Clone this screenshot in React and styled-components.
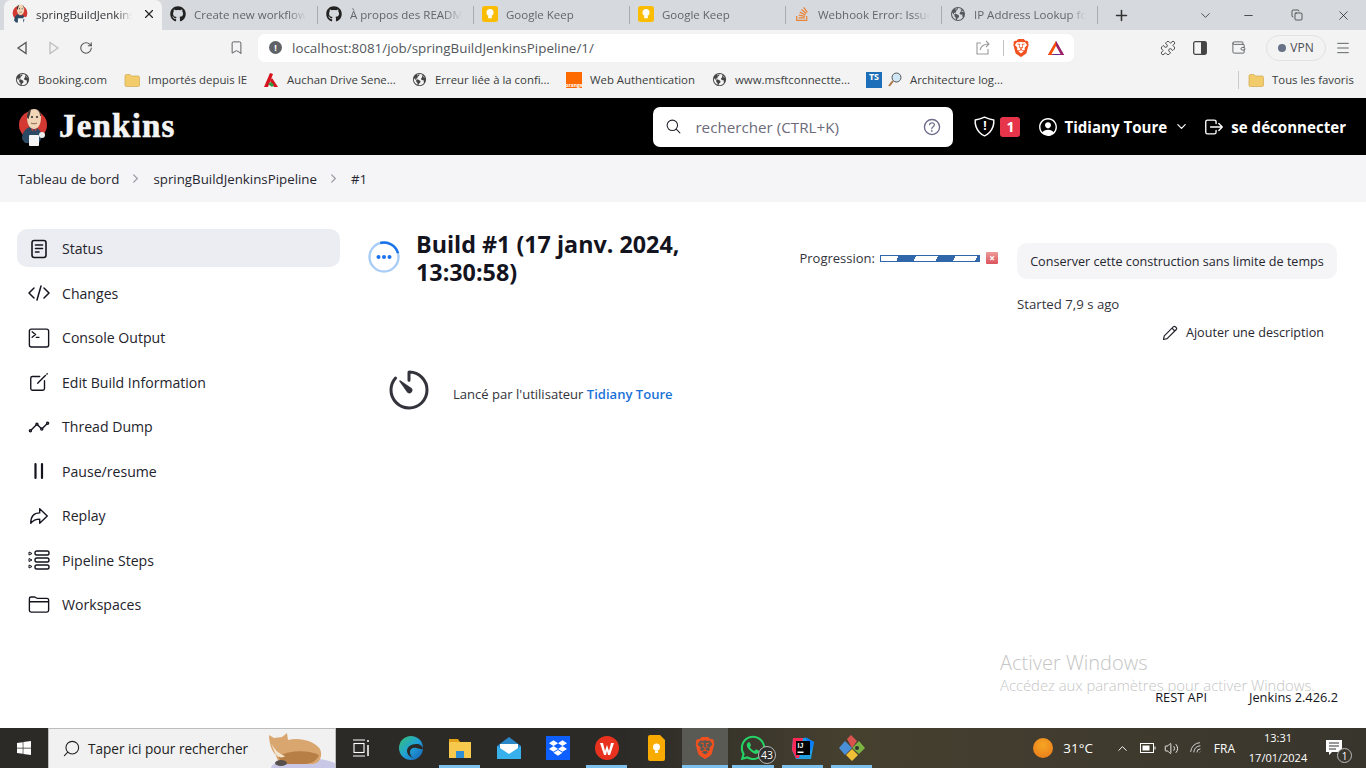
import React from "react";
import styled, { createGlobalStyle } from "styled-components";
import { FaGithub, FaStackOverflow, FaWindows, FaDropbox, FaWhatsapp } from "react-icons/fa";
import { SiBrave } from "react-icons/si";
import {
  IoTerminalOutline,
  IoCreateOutline,
  IoAnalyticsOutline,
  IoArrowRedoOutline,
  IoFolderOutline,
  IoSearchOutline,
  IoHelpCircleOutline,
  IoPersonCircleOutline,
  IoLogOutOutline,
  IoChevronDownOutline,
  IoChevronForwardOutline,
  IoTimerOutline,
  IoEarth,
  IoShieldOutline,
} from "react-icons/io5";
import { Plus, ChevronDown, Minus, Copy, X, RotateCw, Bookmark, Puzzle, Wallet, Menu, Search, ChevronUp, Volume2, Wifi } from "lucide-react";

const GlobalStyle = createGlobalStyle`
  html, body {
    margin: 0;
    padding: 0;
    height: 100%;
    overflow: hidden;
    background: #fff;
  }
  body {
    font-family: "Open Sans", "Liberation Sans", sans-serif;
    color: #14141f;
  }
  * { box-sizing: border-box; }
`;

const Page = styled.div`
  position: relative;
  width: 1366px;
  height: 768px;
  display: flex;
  flex-direction: column;
  overflow: hidden;
`;

/* browser chrome */

const TabStrip = styled.div`
  height: 30px;
  background: #d6dade;
  display: flex;
  align-items: stretch;
  padding-left: 4px;
  flex-shrink: 0;
`;

const Tab = styled.div`
  width: ${({ $active }) => ($active ? "158px" : "156px")};
  display: flex;
  align-items: center;
  gap: 8px;
  padding: 0 0 2px 8px;
  font-size: 11.5px;
  color: ${({ $active }) => ($active ? "#33363a" : "#62666a")};
  background: ${({ $active }) => ($active ? "#f3f3f3" : "transparent")};
  border-radius: ${({ $active }) => ($active ? "7px 7px 0 0" : "0")};
  position: relative;
  &::after {
    content: "";
    display: ${({ $active }) => ($active ? "none" : "block")};
    position: absolute;
    right: 0;
    top: 6px;
    bottom: 6px;
    width: 1px;
    background: #a9adb1;
  }
`;

const TabTitle = styled.span`
  white-space: nowrap;
  overflow: hidden;
  width: ${({ $w }) => $w || "112px"};
  -webkit-mask-image: linear-gradient(to right, #000 84%, transparent);
  mask-image: linear-gradient(to right, #000 84%, transparent);
`;

const TabClose = styled.span`
  display: flex;
  margin-left: 2px;
  color: #222;
`;

const NewTab = styled.div`
  margin-left: 15px;
  display: flex;
  align-items: center;
  color: #333;
`;

const WindowControls = styled.div`
  margin-left: auto;
  display: flex;
  align-items: center;
  color: #222;
  padding-right: 15px;
`;

const WindowButton = styled.span`
  display: flex;
  margin-left: ${({ $ml }) => $ml || 0}px;
`;

const Toolbar = styled.div`
  height: 35px;
  background: #f3f3f3;
  display: flex;
  align-items: center;
  padding-left: 15px;
  flex-shrink: 0;
  color: #55585c;
`;

const ToolIcon = styled.span`
  display: flex;
  align-items: center;
  justify-content: center;
  margin-left: ${({ $ml }) => $ml || 0}px;
  color: ${({ $color }) => $color || "#55585c"};
`;

const UrlBox = styled.div`
  margin-left: 14px;
  width: 816px;
  height: 28px;
  background: #fff;
  border-radius: 7px;
  display: flex;
  align-items: center;
  padding: 0 9px 0 11px;
  font-size: 13.4px;
  color: #53575b;
`;

const UrlDot = styled.span`
  width: 13px;
  height: 13px;
  border-radius: 50%;
  background: #5f6368;
  color: #fff;
  font-size: 9px;
  font-weight: 700;
  display: flex;
  align-items: center;
  justify-content: center;
  margin-right: 10px;
`;

const UrlText = styled.span`
  flex: 1;
`;

const UrlDivider = styled.span`
  width: 1px;
  height: 16px;
  background: #c2c2c2;
  margin-left: 12px;
`;

const VpnPill = styled.div`
  margin-left: 20px;
  width: 60px;
  height: 26px;
  border: 1px solid #e2e2e2;
  border-radius: 13px;
  display: flex;
  align-items: center;
  justify-content: center;
  gap: 4px;
  font-size: 12px;
  color: #4c5054;
`;

const VpnDot = styled.span`
  width: 8px;
  height: 8px;
  border-radius: 50%;
  background: #6a7288;
`;

const BookmarksBar = styled.div`
  height: 33px;
  background: #f3f3f3;
  display: flex;
  align-items: center;
  padding: 0 0 4px 15px;
  flex-shrink: 0;
`;

const BookmarkItem = styled.div`
  width: ${({ $w }) => $w}px;
  display: flex;
  align-items: center;
  gap: 8px;
  font-size: 11.4px;
  color: #3a3d40;
  white-space: nowrap;
`;

const BookmarkDivider = styled.span`
  width: 1px;
  height: 18px;
  background: #c9c9c9;
  margin-right: 9px;
`;

const FavSquare = styled.span`
  width: 16px;
  height: 16px;
  flex-shrink: 0;
  display: flex;
  align-items: flex-end;
  justify-content: center;
  background: ${({ $bg }) => $bg};
  color: #fff;
  font-size: ${({ $fs }) => $fs || 5}px;
  font-weight: 700;
  line-height: 1;
`;

const TsMark = styled(FavSquare)`
  align-items: flex-start;
  margin-right: -2px;
`;

/* jenkins page */

const JenkinsHeader = styled.header`
  height: 57px;
  background: #000;
  display: flex;
  align-items: center;
  padding: 0 20px 0 18px;
  color: #fff;
  flex-shrink: 0;
`;

const Brand = styled.div`
  display: flex;
  align-items: center;
  gap: 11px;
  font-family: "Liberation Serif", serif;
  font-weight: 700;
  font-size: 33px;
  letter-spacing: 1.2px;
  -webkit-text-stroke: 0.6px #f4f4f4;
  color: #f4f4f4;
`;

const SearchBox = styled.div`
  margin-left: auto;
  width: 300px;
  height: 40px;
  border-radius: 7px;
  background: #fff;
  display: flex;
  align-items: center;
  padding: 0 10px 0 12px;
  color: #6d6b7a;
  font-size: 15.2px;
  gap: 13px;
`;

const SearchText = styled.span`
  flex: 1;
`;

const HeaderGroup = styled.div`
  display: flex;
  align-items: center;
  margin-left: ${({ $ml }) => $ml}px;
  gap: ${({ $gap }) => $gap}px;
  font-weight: 700;
  font-size: 15.1px;
  white-space: nowrap;
`;

const ShieldWrap = styled.span`
  position: relative;
  display: flex;
`;

const ShieldMark = styled.span`
  position: absolute;
  left: 0;
  right: 0;
  top: 3px;
  text-align: center;
  font-size: 12px;
  font-weight: 700;
  line-height: 15px;
`;

const AlertBadge = styled.span`
  width: 20px;
  height: 20px;
  border-radius: 3px;
  background: #e6354a;
  color: #fff;
  font-size: 14px;
  display: flex;
  align-items: center;
  justify-content: center;
`;

const UserChevron = styled(IoChevronDownOutline)`
  margin-left: 3px;
`;

const Breadcrumbs = styled.nav`
  height: 47px;
  background: #f5f5f8;
  display: flex;
  align-items: center;
  padding-left: 18px;
  font-size: 13.3px;
  font-weight: 500;
  color: #26262f;
  flex-shrink: 0;
`;

const CrumbArrow = styled.span`
  display: flex;
  margin: 0 11px 0 10px;
  color: #9a9aa3;
`;

const Content = styled.div`
  flex: 1;
  display: flex;
  flex-direction: column;
  background: #fff;
`;

const Layout = styled.div`
  flex: 1;
  display: flex;
  padding: 27px 29px 0 17px;
`;

const SideNav = styled.aside`
  width: 323px;
  flex-shrink: 0;
  display: flex;
  flex-direction: column;
  gap: 6.5px;
`;

const NavItem = styled.div`
  height: 38px;
  border-radius: 10px;
  background: ${({ $active }) => ($active ? "#ecedf2" : "transparent")};
  display: flex;
  align-items: center;
  padding: 1px 0 0 11px;
  gap: 12px;
  font-size: 14.1px;
  font-weight: 500;
  color: #23232c;
`;

const NavIcon = styled.span`
  width: 22px;
  height: 22px;
  display: flex;
  align-items: center;
  justify-content: center;
  color: #14141f;
`;

const Main = styled.main`
  flex: 1;
  margin-left: 28px;
  min-width: 0;
`;

const TitleRow = styled.div`
  display: flex;
  align-items: flex-start;
  gap: 16px;
  margin-top: 1px;
`;

const SpinnerSlot = styled.span`
  display: flex;
  margin-top: 11px;
`;

const BuildTitle = styled.h1`
  margin: 0;
  width: 300px;
  font-size: 23.3px;
  line-height: 28px;
  font-weight: 700;
  color: #14141f;
`;

const CauseRow = styled.div`
  display: flex;
  align-items: center;
  margin: 80px 0 0 17px;
  gap: 20px;
  font-size: 13.05px;
  color: #33333c;
`;

const CauseText = styled.span`
  margin-top: 8px;
`;

const UserLink = styled.a`
  color: #1a73d9;
  font-weight: 600;
`;

const ProgressBox = styled.div`
  display: flex;
  align-items: center;
  align-self: flex-start;
  margin: 20px 19px 0 0;
  font-size: 13px;
  color: #33333c;
  gap: 5px;
`;

const ProgressBar = styled.div`
  width: 100px;
  height: 7px;
  border: 1px solid #2f67aa;
  background: linear-gradient(
    114deg,
    #fff 0 16px,
    #2f67aa 16px 32px,
    #fff 32px 52px,
    #2f67aa 52px 68px,
    #fff 68px 88px,
    #2f67aa 88px
  );
`;

const StopButton = styled.span`
  width: 12px;
  height: 12px;
  margin-left: 1px;
  border-radius: 1px;
  background: linear-gradient(#ef9a9a, #d9535a);
  color: #fff;
  font-size: 10px;
  font-weight: 700;
  line-height: 12px;
  text-align: center;
`;

const SideInfo = styled.div`
  width: 320px;
  flex-shrink: 0;
  padding-top: 14px;
`;

const KeepButton = styled.div`
  height: 36px;
  border-radius: 10px;
  background: #f5f5f8;
  display: flex;
  align-items: center;
  justify-content: center;
  font-size: 12.6px;
  font-weight: 500;
  color: #26262f;
  white-space: nowrap;
`;

const StartedText = styled.div`
  margin-top: 16px;
  font-size: 13.2px;
  color: #33333c;
`;

const DescriptionLink = styled.div`
  margin-top: 11px;
  padding-right: 13px;
  display: flex;
  justify-content: flex-end;
  align-items: center;
  gap: 8px;
  font-size: 12.6px;
  font-weight: 500;
  color: #26262f;
`;

const Footer = styled.footer`
  height: 50px;
  display: flex;
  justify-content: flex-end;
  gap: 42px;
  padding: 10px 28px 0 0;
  font-size: 12.8px;
  color: #15151c;
`;

const Watermark = styled.div`
  position: absolute;
  left: 1000px;
  top: 650px;
  color: #c5c5c5;
  font-weight: 300;
  pointer-events: none;
`;

const WatermarkTitle = styled.div`
  font-size: 20px;
  line-height: 25px;
`;

const WatermarkLine = styled.div`
  font-size: 14.8px;
  line-height: 20px;
  white-space: nowrap;
`;

/* windows taskbar */

const Taskbar = styled.div`
  height: 40px;
  display: flex;
  align-items: center;
  background: linear-gradient(to right, #2b2a27, #2b2a27 45%, #46402f 62%, #38352d 100%);
  color: #fff;
  flex-shrink: 0;
  position: relative;
`;

const StartButton = styled.div`
  width: 48px;
  display: flex;
  justify-content: center;
`;

const SearchBar = styled.div`
  width: 288px;
  height: 40px;
  background: #f1f1f1;
  border: 1px solid #bdbdbd;
  border-bottom: 0;
  display: flex;
  align-items: center;
  padding-left: 13px;
  gap: 7px;
  font-size: 13.6px;
  color: #222;
  overflow: hidden;
`;

const SearchGlass = styled(Search)`
  transform: scaleX(-1);
`;

const FoxArt = styled.span`
  margin-left: auto;
  display: flex;
`;

const TaskApps = styled.div`
  display: flex;
  height: 40px;
`;

const TaskApp = styled.div`
  position: relative;
  width: ${({ $w }) => $w || 49}px;
  height: 40px;
  display: flex;
  align-items: center;
  justify-content: center;
  background: ${({ $active }) => ($active ? "#5a5a55" : "transparent")};
  &::after {
    content: "";
    display: ${({ $open }) => ($open ? "block" : "none")};
    position: absolute;
    left: ${({ $active }) => ($active ? "0" : "4px")};
    right: ${({ $active }) => ($active ? "0" : "4px")};
    bottom: 0;
    height: 3px;
    background: #7cc0ee;
  }
`;

const DropboxTile = styled.span`
  width: 24px;
  height: 24px;
  display: flex;
  align-items: center;
  justify-content: center;
  background: #0d5fff;
  color: #fff;
`;

const CountBadge = styled.span`
  position: absolute;
  right: 2px;
  bottom: 4px;
  width: 18px;
  height: 18px;
  border-radius: 50%;
  border: 1px solid #bbb;
  background: #2f2e2a;
  color: #fff;
  font-size: 10.5px;
  display: flex;
  align-items: center;
  justify-content: center;
`;

const Tray = styled.div`
  margin-left: auto;
  display: flex;
  align-items: center;
  font-size: 12px;
  height: 40px;
`;

const SunIcon = styled.span`
  width: 20px;
  height: 20px;
  border-radius: 50%;
  background: radial-gradient(circle at 50% 35%, #f5a623, #e8761a);
`;

const TrayText = styled.span`
  margin-left: ${({ $ml }) => $ml || 0}px;
  font-size: ${({ $fs }) => $fs || 12}px;
`;

const TrayIcon = styled.span`
  display: flex;
  margin-left: ${({ $ml }) => $ml}px;
`;

const TrayWifi = styled(Wifi)`
  transform: rotate(-45deg);
`;

const Clock = styled.div`
  margin-left: 13px;
  width: 60px;
  text-align: center;
  font-size: 11px;
  line-height: 20px;
`;

const NotifyButton = styled.div`
  position: relative;
  margin: 0 24px 0 18px;
  display: flex;
`;

const NotifyCount = styled.span`
  position: absolute;
  right: -10px;
  bottom: -7px;
  width: 15px;
  height: 15px;
  border-radius: 50%;
  border: 1px solid #bbb;
  background: #3a372e;
  font-size: 10px;
  display: flex;
  align-items: center;
  justify-content: center;
`;

const Butler = ({ width = 30, height = 38 }) => (
  <svg width={width} height={height} viewBox="0 0 30 38">
    <circle cx="15" cy="17" r="14" fill="#d33833" />
    <path d="M4 31c0-7 4-11 8-12l7 1c3 2 5 5 5 9l-3 6H7z" fill="#2c4a63" />
    <path d="M9 9c0-5 3-8 7-8s7 3 7 8c0 6-2 12-7 12S9 15 9 9z" fill="#f0d6b7" />
    <path d="M9 9c0-4 2-7 4-7-1 3-1 5-2 7 0 2-1 3-2 0zM22 8c0-3-1-5-3-6 2 0 4 3 4 6z" fill="#3a3431" />
    <path d="M13 20l3 2 3-2-1 3-2-1-2 1z" fill="#d33833" />
    <circle cx="14" cy="9" r="1" fill="#222" />
    <circle cx="19" cy="9" r="1" fill="#222" />
    <path d="M13 15c2 1 4 1 6 0" stroke="#8a5a44" fill="none" />
    <rect x="11" y="27" width="10" height="11" rx="1" fill="#f4f4f4" />
    <circle cx="24" cy="27" r="3" fill="#eee" />
  </svg>
);

const BackIcon = ({ muted }) => (
  <svg width="14" height="14" viewBox="0 0 14 14" fill="none" stroke={muted ? "#bdbdbd" : "#555"} strokeWidth="1.3">
    {muted ? <path d="M3 1.5v11l8-5.5z" /> : <path d="M11 1.5v11L3 7z" />}
  </svg>
);

const ShareIcon = () => (
  <svg width="16" height="16" viewBox="0 0 16 16" fill="none" stroke="#9b9b9b" strokeWidth="1.1">
    <path d="M6 3H2v11h11V9" />
    <path d="M5 10c1-4 4-6 9-6M11 1l3 3-3 3" />
  </svg>
);

const BatIcon = () => (
  <svg width="18" height="16" viewBox="0 0 18 16">
    <path d="M9 1l8 14H1z" fill="#662d91" />
    <path d="M9 1l8 14h-4L9 8z" fill="#9e1f63" />
    <path d="M9 1L1 15h4l4-7z" fill="#ff5000" />
    <path d="M9 6l4.5 8h-9z" fill="#fff" />
  </svg>
);

const SidePanelIcon = () => (
  <svg width="14" height="14" viewBox="0 0 14 14">
    <rect x="0.7" y="0.7" width="12.6" height="12.6" rx="1.5" fill="none" stroke="#444" strokeWidth="1.3" />
    <rect x="8" y="1" width="5" height="12" fill="#444" />
  </svg>
);

const Folder = () => (
  <svg width="16" height="16" viewBox="0 0 16 16">
    <path d="M1 4c0-1 .5-1.5 1.5-1.5H6L7.5 4H14c1 0 1.5.5 1.5 1.5V13c0 1-.5 1.5-1.5 1.5H2.5c-1 0-1.5-.5-1.5-1.5z" fill="#f2cb6a" stroke="#c9a13f" strokeWidth="0.6" />
  </svg>
);

const Auchan = () => (
  <svg width="16" height="16" viewBox="0 0 16 16">
    <path d="M7 1l3 1-5 13H1z" fill="#d6121f" />
    <path d="M9 6l6 9h-4L7 9z" fill="#d6121f" />
    <path d="M5 12l3-2 3 3-2 2z" fill="#2d9c45" />
  </svg>
);

const KeepIcon = () => (
  <svg width="16" height="16" viewBox="0 0 16 16">
    <rect width="16" height="16" rx="2.5" fill="#fbbc04" />
    <circle cx="8" cy="6.5" r="3.5" fill="#fff" />
    <rect x="6.2" y="9.5" width="3.6" height="2.8" fill="#fff" />
  </svg>
);

const Magnifier = () => (
  <svg width="14" height="16" viewBox="0 0 14 16">
    <circle cx="8.5" cy="5.5" r="4.5" fill="#cfe6f5" stroke="#555" />
    <path d="M5 9l-4 5" stroke="#a8763e" strokeWidth="2" />
  </svg>
);

const Fox = () => (
  <svg width="78" height="40" viewBox="0 0 78 40">
    <ellipse cx="48" cy="39" rx="34" ry="10" fill="#c9c7e6" />
    <path d="M12 6l5 3 8-1 5-4 1 7c10-3 26 0 32 9 3 7 0 14-7 15H30c-8 0-10-4-11-9-4-3-7-12-7-20z" fill="#d9a66f" />
    <path d="M22 27c10-5 26-7 40-1-3 7-9 9-16 9H28c-4 0-6-4-6-8z" fill="#b77e45" />
    <path d="M14 14c4 7 8 11 14 13-3 3-8 1-10-3z" fill="#f4e5cf" />
    <ellipse cx="24" cy="34" rx="6" ry="3" fill="#55504b" />
  </svg>
);

const TaskViewIcon = () => (
  <svg width="16" height="18" viewBox="0 0 16 18" fill="none" stroke="#fff" strokeWidth="1.1">
    <path d="M0 1h12M0 17h12" />
    <rect x="1" y="4.5" width="10" height="9" />
    <path d="M15 1v2M15 6v11" strokeWidth="1.5" />
  </svg>
);

const EdgeIcon = () => (
  <svg width="24" height="24" viewBox="0 0 24 24">
    <defs>
      <linearGradient id="edgeFill" x1="0" y1="0" x2="1" y2="1">
        <stop offset="0" stopColor="#36c26f" />
        <stop offset="0.5" stopColor="#21a3d8" />
        <stop offset="1" stopColor="#1560b8" />
      </linearGradient>
    </defs>
    <circle cx="12" cy="12" r="12" fill="url(#edgeFill)" />
    <path d="M24 13c0-3-3-5-7-5-5 0-9 3-9 7 0 4 4 7 8 7-3 0-5-3-5-6 0-3 3-5 6-4 3 0 5 2 7 1z" fill="#2b2a27" />
  </svg>
);

const ExplorerIcon = () => (
  <svg width="24" height="22" viewBox="0 0 24 22">
    <path d="M1 2h9l2 3H1z" fill="#e3a21a" />
    <rect x="1" y="5" width="22" height="16" fill="#f6c94c" />
    <rect x="8" y="14" width="8" height="7" fill="#2f8fd6" />
  </svg>
);

const MailIcon = () => (
  <svg width="24" height="22" viewBox="0 0 24 22">
    <path d="M12 0l12 9v13H0V9z" fill="#2a87c8" />
    <path d="M3 7h18v6l-9 5-9-5z" fill="#fff" />
    <path d="M0 9l12 8 12-8v13H0z" fill="#38b0ec" />
  </svg>
);

const WpsIcon = () => (
  <svg width="24" height="24" viewBox="0 0 24 24">
    <circle cx="12" cy="12" r="12" fill="#e8321f" />
    <path d="M5 7h3l2 8 2-6 2 6 2-8h3l-4 12h-2l-1-4-1 4h-2z" fill="#fff" />
  </svg>
);

const KeepDocIcon = () => (
  <svg width="17" height="26" viewBox="0 0 17 26">
    <path d="M2 0h10l5 5v19a2 2 0 0 1-2 2H2a2 2 0 0 1-2-2V2a2 2 0 0 1 2-2z" fill="#f9ab00" />
    <circle cx="8.5" cy="12" r="3.5" fill="#fff" />
    <rect x="7" y="15.5" width="3" height="2.5" fill="#fff" />
  </svg>
);

const IdeaIcon = () => (
  <svg width="24" height="24" viewBox="0 0 24 24">
    <path d="M2 2h14l7 4-3 17H5L1 14z" fill="#1f9ee0" />
    <path d="M2 2h10L8 22H5L1 14z" fill="#fe2857" />
    <path d="M14 1l9 5-3 9z" fill="#087cfa" />
    <rect x="5" y="5" width="14" height="14" fill="#000" />
    <text x="6.5" y="12" fontSize="7" fontWeight="700" fill="#fff" fontFamily="Liberation Sans">IJ</text>
    <rect x="6.5" y="15.5" width="6" height="1.5" fill="#fff" />
  </svg>
);

const GitExtIcon = () => (
  <svg width="26" height="26" viewBox="0 0 26 26">
    <path d="M13 13L6 6l-6 7 6 7z" fill="#4a90d9" />
    <path d="M13 13l7-7 6 7-6 6z" fill="#7cb342" />
    <path d="M13 13L8 4l4-4 6 6z" fill="#d9534f" />
    <path d="M13 14l-6 6 6 6 6-6z" fill="#f2c037" />
    <circle cx="18" cy="13" r="2" fill="#333" />
  </svg>
);

const BatteryIcon = () => (
  <svg width="16" height="12" viewBox="0 0 16 12" fill="none" stroke="#fff">
    <rect x="0.5" y="1.5" width="13" height="9" />
    <rect x="2.5" y="3.5" width="7" height="5" fill="#fff" stroke="none" />
    <path d="M15 4.5v3" />
  </svg>
);

const NotifyIcon = () => (
  <svg width="16" height="16" viewBox="0 0 16 16">
    <path d="M0 0h16v12H6l-3 3v-3H0z" fill="#fff" />
    <path d="M3 3h10M3 6h10M3 9h7" stroke="#333" />
  </svg>
);

const StatusIcon = () => (
  <svg width="22" height="22" viewBox="0 0 22 22" fill="none" stroke="#14141f" strokeWidth="1.6" strokeLinecap="round">
    <rect x="4" y="2.5" width="14" height="17" rx="2.2" />
    <path d="M7.5 7h7M7.5 10.5h7M7.5 14h3.5" />
  </svg>
);

const CodeIcon = () => (
  <svg width="22" height="16" viewBox="0 0 22 16" fill="none" stroke="#14141f" strokeWidth="1.5" strokeLinecap="round" strokeLinejoin="round">
    <path d="M6 3L1 8l5 5M16 3l5 5-5 5M13 1L9 15" />
  </svg>
);

const PauseIcon = () => (
  <svg width="22" height="22" viewBox="0 0 22 22" stroke="#14141f" strokeWidth="2.2" strokeLinecap="round">
    <path d="M7.5 4v14M14 4v14" />
  </svg>
);

const StepsIcon = () => (
  <svg width="22" height="20" viewBox="0 0 22 20" fill="none" stroke="#14141f" strokeWidth="1.4">
    <path d="M1 2l3 1.5L1 5zM1 8.5l3 1.5-3 1.5zM1 15l3 1.5L1 18z" strokeWidth="1" />
    <rect x="7" y="1" width="14" height="4" rx="1.8" />
    <rect x="7" y="8" width="14" height="4" rx="1.8" />
    <rect x="7" y="15" width="14" height="4" rx="1.8" />
  </svg>
);

const SpinnerIcon = () => (
  <svg width="32" height="32" viewBox="0 0 32 32" fill="none">
    <circle cx="16" cy="16" r="14.5" stroke="#a9cdf7" strokeWidth="2.4" />
    <path d="M16 1.5A14.5 14.5 0 0 1 30.5 16" stroke="#1a73e8" strokeWidth="2.4" transform="rotate(-15 16 16)" />
    <circle cx="10.5" cy="16" r="2" fill="#1a73e8" />
    <circle cx="16" cy="16" r="2" fill="#1a73e8" />
    <circle cx="21.5" cy="16" r="2" fill="#1a73e8" />
  </svg>
);

const PencilIcon = () => (
  <svg width="16" height="16" viewBox="0 0 16 16" fill="none" stroke="#26262f" strokeWidth="1.2" strokeLinejoin="round">
    <path d="M1.5 14.5l.8-3.6L11.5 1.7a1.3 1.3 0 0 1 1.8 0l1 1a1.3 1.3 0 0 1 0 1.8L5.100 13.7z" />
    <path d="M10 3.2l2.8 2.8" />
  </svg>
);

const tabs = [
  { title: "Create new workflow · fa", icon: <FaGithub size={16} color="#222" /> },
  { title: "À propos des README", icon: <FaGithub size={16} color="#222" /> },
  { title: "Google Keep", icon: <KeepIcon /> },
  { title: "Google Keep", icon: <KeepIcon /> },
  { title: "Webhook Error: Issue w", icon: <FaStackOverflow size={16} color="#e8843a" /> },
  { title: "IP Address Lookup for", icon: <IoEarth size={16} color="#55585c" /> },
];

const bookmarks = [
  { w: 109, label: "Booking.com", icon: <IoEarth size={15} color="#444" /> },
  { w: 139, label: "Importés depuis IE", icon: <Folder /> },
  { w: 149, label: "Auchan Drive Sene...", icon: <Auchan /> },
  { w: 154, label: "Erreur liée à la confi...", icon: <IoEarth size={15} color="#444" /> },
  { w: 146, label: "Web Authentication", icon: <FavSquare $bg="#ff6a00">orange</FavSquare> },
  { w: 154, label: "www.msftconnectte...", icon: <IoEarth size={15} color="#444" /> },
  {
    w: 372,
    label: "Architecture log...",
    icon: (
      <>
        <TsMark $bg="#1c6fb8" $fs={9}>TS</TsMark>
        <Magnifier />
      </>
    ),
  },
];

const navItems = [
  { label: "Status", icon: <StatusIcon />, active: true },
  { label: "Changes", icon: <CodeIcon /> },
  { label: "Console Output", icon: <IoTerminalOutline size={22} /> },
  { label: "Edit Build Information", icon: <IoCreateOutline size={22} /> },
  { label: "Thread Dump", icon: <IoAnalyticsOutline size={22} /> },
  { label: "Pause/resume", icon: <PauseIcon /> },
  { label: "Replay", icon: <IoArrowRedoOutline size={22} /> },
  { label: "Pipeline Steps", icon: <StepsIcon /> },
  { label: "Workspaces", icon: <IoFolderOutline size={23} /> },
];

const taskApps = [
  { w: 49, icon: <EdgeIcon /> },
  { w: 49, icon: <ExplorerIcon />, open: true },
  { w: 49, icon: <MailIcon /> },
  { w: 49, icon: <DropboxTile><FaDropbox size={18} /></DropboxTile> },
  { w: 49, icon: <WpsIcon />, open: true },
  { w: 51, icon: <KeepDocIcon /> },
  { w: 46, icon: <SiBrave size={22} color="#f1501f" />, open: true, active: true },
  { w: 50, icon: <FaWhatsapp size={28} color="#25d366" />, open: true, badge: 43 },
  { w: 49, icon: <IdeaIcon />, open: true },
  { w: 49, icon: <GitExtIcon />, open: true },
];

export default function App() {
  return (
    <Page>
      <GlobalStyle />
      <TabStrip>
        <Tab $active>
          <Butler width={16} height={20} />
          <TabTitle $w="96px">springBuildJenkinsPipeline</TabTitle>
          <TabClose><X size={14} strokeWidth={2} /></TabClose>
        </Tab>
        {tabs.map((tab, i) => (
          <Tab key={i}>
            {tab.icon}
            <TabTitle>{tab.title}</TabTitle>
          </Tab>
        ))}
        <NewTab><Plus size={17} strokeWidth={2.2} /></NewTab>
        <WindowControls>
          <WindowButton><ChevronDown size={15} strokeWidth={1.2} /></WindowButton>
          <WindowButton $ml={29}><Minus size={13} strokeWidth={1.4} /></WindowButton>
          <WindowButton $ml={36}><Copy size={12} strokeWidth={1.4} /></WindowButton>
          <WindowButton $ml={33}><X size={15} strokeWidth={1.2} /></WindowButton>
        </WindowControls>
      </TabStrip>

      <Toolbar>
        <ToolIcon><BackIcon /></ToolIcon>
        <ToolIcon $ml={18}><BackIcon muted /></ToolIcon>
        <ToolIcon $ml={18}><RotateCw size={14} strokeWidth={1.8} color="#555" /></ToolIcon>
        <ToolIcon $ml={136}><Bookmark size={15} strokeWidth={1.5} /></ToolIcon>
        <UrlBox>
          <UrlDot>!</UrlDot>
          <UrlText>localhost:8081/job/springBuildJenkinsPipeline/1/</UrlText>
          <ShareIcon />
          <UrlDivider />
          <ToolIcon $ml={8}><SiBrave size={18} color="#f1501f" /></ToolIcon>
          <ToolIcon $ml={17}><BatIcon /></ToolIcon>
        </UrlBox>
        <ToolIcon $ml={86}><Puzzle size={16} strokeWidth={1.4} color="#444" /></ToolIcon>
        <ToolIcon $ml={17}><SidePanelIcon /></ToolIcon>
        <ToolIcon $ml={24}><Wallet size={15} strokeWidth={1.4} /></ToolIcon>
        <VpnPill><VpnDot />VPN</VpnPill>
        <ToolIcon $ml={9}><Menu size={16} strokeWidth={1.4} /></ToolIcon>
      </Toolbar>

      <BookmarksBar>
        {bookmarks.map((b) => (
          <BookmarkItem key={b.label} $w={b.w}>
            {b.icon}
            {b.label}
          </BookmarkItem>
        ))}
        <BookmarkDivider />
        <BookmarkItem $w={110}><Folder />Tous les favoris</BookmarkItem>
      </BookmarksBar>

      <JenkinsHeader>
        <Brand><Butler />Jenkins</Brand>
        <SearchBox>
          <IoSearchOutline size={17} color="#22222c" />
          <SearchText>rechercher (CTRL+K)</SearchText>
          <IoHelpCircleOutline size={22} color="#6d6b8a" />
        </SearchBox>
        <HeaderGroup $ml={20} $gap={4}>
          <ShieldWrap>
            <IoShieldOutline size={23} />
            <ShieldMark>!</ShieldMark>
          </ShieldWrap>
          <AlertBadge>1</AlertBadge>
        </HeaderGroup>
        <HeaderGroup $ml={17} $gap={5}>
          <IoPersonCircleOutline size={22} />
          Tidiany Toure
          <UserChevron size={13} />
        </HeaderGroup>
        <HeaderGroup $ml={15} $gap={6}>
          <IoLogOutOutline size={22} />
          se déconnecter
        </HeaderGroup>
      </JenkinsHeader>

      <Breadcrumbs>
        Tableau de bord
        <CrumbArrow><IoChevronForwardOutline size={13} /></CrumbArrow>
        springBuildJenkinsPipeline
        <CrumbArrow><IoChevronForwardOutline size={13} /></CrumbArrow>
        #1
      </Breadcrumbs>

      <Content>
        <Layout>
          <SideNav>
            {navItems.map((item) => (
              <NavItem key={item.label} $active={item.active}>
                <NavIcon>{item.icon}</NavIcon>
                {item.label}
              </NavItem>
            ))}
          </SideNav>
          <Main>
            <TitleRow>
              <SpinnerSlot><SpinnerIcon /></SpinnerSlot>
              <BuildTitle>Build #1 (17 janv. 2024, 13:30:58)</BuildTitle>
            </TitleRow>
            <CauseRow>
              <IoTimerOutline size={48} />
              <CauseText>Lancé par l'utilisateur <UserLink>Tidiany Toure</UserLink></CauseText>
            </CauseRow>
          </Main>
          <ProgressBox>
            Progression:
            <ProgressBar />
            <StopButton>×</StopButton>
          </ProgressBox>
          <SideInfo>
            <KeepButton>Conserver cette construction sans limite de temps</KeepButton>
            <StartedText>Started 7,9 s ago</StartedText>
            <DescriptionLink>
              <PencilIcon />
              Ajouter une description
            </DescriptionLink>
          </SideInfo>
        </Layout>
        <Footer>
          <span>REST API</span>
          <span>Jenkins 2.426.2</span>
        </Footer>
      </Content>

      <Taskbar>
        <StartButton><FaWindows size={16} color="#fff" /></StartButton>
        <SearchBar>
          <SearchGlass size={19} strokeWidth={1.4} />
          Taper ici pour rechercher
          <FoxArt><Fox /></FoxArt>
        </SearchBar>
        <TaskApp $w={50}><TaskViewIcon /></TaskApp>
        <TaskApps>
          {taskApps.map((app, i) => (
            <TaskApp key={i} $w={app.w} $open={app.open} $active={app.active}>
              {app.icon}
              {app.badge && <CountBadge>{app.badge}</CountBadge>}
            </TaskApp>
          ))}
        </TaskApps>
        <Tray>
          <SunIcon />
          <TrayText $ml={10} $fs={13.4}>31°C</TrayText>
          <TrayIcon $ml={22}><ChevronUp size={15} strokeWidth={1.5} /></TrayIcon>
          <TrayIcon $ml={10}><BatteryIcon /></TrayIcon>
          <TrayIcon $ml={8}><Volume2 size={15} strokeWidth={1.4} /></TrayIcon>
          <TrayIcon $ml={10}><TrayWifi size={15} strokeWidth={1.4} color="#ddd" /></TrayIcon>
          <TrayText $ml={10} $fs={12}>FRA</TrayText>
          <Clock>13:31<br />17/01/2024</Clock>
          <NotifyButton>
            <NotifyIcon />
            <NotifyCount>1</NotifyCount>
          </NotifyButton>
        </Tray>
      </Taskbar>

      <Watermark>
        <WatermarkTitle>Activer Windows</WatermarkTitle>
        <WatermarkLine>Accédez aux paramètres pour activer Windows.</WatermarkLine>
      </Watermark>
    </Page>
  );
}
